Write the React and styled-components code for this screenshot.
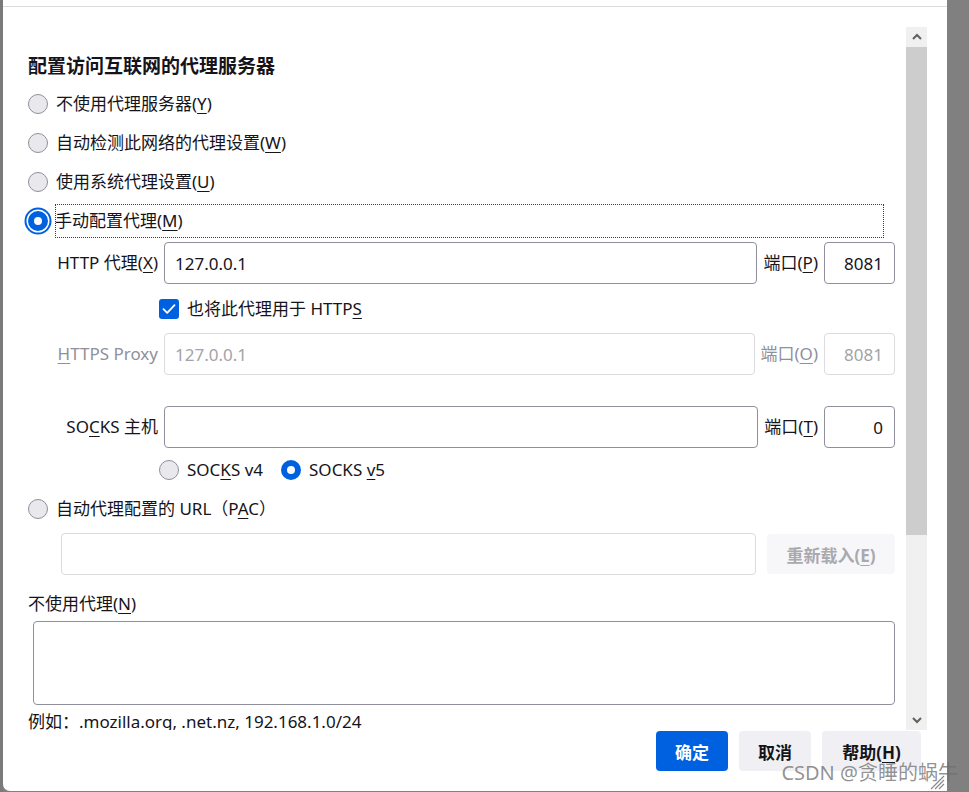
import React from 'react';
import styled, { createGlobalStyle } from 'styled-components';

const Global = createGlobalStyle`
  html, body { margin: 0; padding: 0; }
  body {
    width: 969px; height: 792px; overflow: hidden; background: #808080;
    font-family: "Noto Sans", "Noto Sans CJK SC", sans-serif; color: #15141a;
  }
  u { text-decoration-thickness: 1px; text-underline-offset: 3px; }
`;

const Screen = styled.div`
  display: flex; width: 969px; height: 792px; position: relative; overflow: hidden;
`;
const BackStrip = styled.div`
  width: 3px; flex: none; background: #7a7a7a;
`;
const Shade = styled.div`
  flex: 1; background: #808080;
`;
const Dialog = styled.div`
  position: relative; flex: none; width: 944px; height: 791px; background: #fff;
  display: flex; flex-direction: column; border-bottom-left-radius: 7px;
`;
const TopEdge = styled.div`
  flex: none; height: 6px; border-bottom: 1px solid #dcdcdc;
`;
const Body = styled.div`
  flex: none; display: flex; margin-top: 20px; height: 703px; padding-right: 20px;
`;
const Content = styled.div`
  flex: 1; overflow: hidden; padding: 27px 11px 0 25px; display: flex; flex-direction: column;
`;
const Title = styled.h1`
  margin: 0; font-size: 19px; font-weight: 700; line-height: 24px;
`;
const RadioRow = styled.div`
  display: flex; align-items: center; gap: 8px; height: 39px; flex: none;
  margin-top: ${p => p.$mt || 0}px;
`;
const RadioCircle = styled.span`
  flex: none; box-sizing: border-box; width: 20px; height: 20px; border-radius: 50%;
  border: ${p => (p.$checked ? '6px solid #0061e0' : '1px solid #8f8f9d')};
  background: ${p => (p.$checked ? '#fbfbfe' : '#e9e9ed')};
  box-shadow: ${p => (p.$focus ? '0 0 0 1.5px #fff, 0 0 0 3.5px #0061e0' : 'none')};
`;
const Label = styled.span`
  font-size: 17px; line-height: 24px; white-space: nowrap;
  color: ${p => (p.$disabled ? '#8f8f9d' : '#15141a')};
`;
const FocusLabel = styled.span`
  flex: 1; display: flex; align-items: center; height: 34px; box-sizing: border-box;
  margin-left: -1px; margin-right: 11px; outline: 1px dotted #3a3a3a; outline-offset: -1px;
  font-size: 17px; line-height: 24px; white-space: nowrap;
`;
const ProxyRow = styled.div`
  display: flex; align-items: center; gap: 6px; height: 42px; flex: none;
  padding-left: 28px; margin-top: ${p => p.$mt || 0}px;
`;
const FieldLabel = styled.span`
  flex: none; width: 102px; text-align: right; font-size: 17px; line-height: 24px; white-space: nowrap;
  color: ${p => (p.$disabled ? '#8f8f9d' : '#15141a')};
`;
const TextBox = styled.input`
  flex: 1; min-width: 0; height: 42px; box-sizing: border-box; margin: 0;
  border: 1px solid ${p => (p.disabled ? '#dcdce0' : '#8f8f9d')}; border-radius: 4px;
  padding: 0 10px; background: #fff; font: inherit; font-size: 17px;
  color: ${p => (p.disabled ? '#a3a3a8' : '#15141a')}; outline: none;
`;
const PortBox = styled(TextBox)`
  flex: none; width: 71px; text-align: right; padding: 0 11px 0 6px;
`;
const CheckRow = styled.div`
  display: flex; align-items: center; gap: 8px; height: 38px; flex: none;
  padding-left: 131px; margin-top: 6px;
`;
const CheckBox = styled.span`
  flex: none; width: 20px; height: 20px; border-radius: 3px; background: #0061e0;
  display: flex; align-items: center; justify-content: center;
`;
const SocksRow = styled.div`
  display: flex; align-items: center; gap: 18px; height: 36px; flex: none;
  padding-left: 131px; margin-top: 4px;
`;
const Option = styled.span`
  display: flex; align-items: center; gap: 8px;
`;
const PacRow = styled.div`
  display: flex; align-items: center; gap: 11px; height: 42px; flex: none;
  padding-left: 33px; margin-top: 5px;
`;
const ReloadButton = styled.button`
  flex: none; width: 128px; height: 40px; border: none; border-radius: 4px;
  background: #f7f7f9; color: #a9a9ae; font: inherit; font-size: 17px; font-weight: 700;
`;
const SectionLabel = styled.div`
  font-size: 17px; line-height: 24px; margin-top: ${p => p.$mt || 0}px; flex: none;
`;
const Area = styled.div`
  flex: none; height: 84px; margin: 5px 0 0 5px; box-sizing: border-box;
  border: 1px solid #8f8f9d; border-radius: 4px;
`;
const Hint = styled.div`
  flex: none; margin-top: 5px; font-size: 17px; line-height: 24px; white-space: nowrap;
`;
const ScrollBar = styled.div`
  flex: none; width: 21px; display: flex; flex-direction: column; background: #f0f0f0;
`;
const ScrollBtn = styled.div`
  flex: none; height: 20px; display: flex; align-items: center; justify-content: center;
  background: #f0f0f0;
`;
const Thumb = styled.div`
  flex: none; height: 488px; background: #cdcdcd;
`;
const Track = styled.div`
  flex: 1;
`;
const Footer = styled.div`
  flex: 1; display: flex; justify-content: flex-end; align-items: flex-start; gap: 11px;
  padding: 1px 26px 0 0;
`;
const Button = styled.button`
  flex: none; height: 40px; width: ${p => p.$w}px; border: none; border-radius: 4px;
  background: ${p => (p.$primary ? '#0061e0' : '#f0f0f4')};
  color: ${p => (p.$primary ? '#fff' : '#15141a')};
  font: inherit; font-size: 17px; font-weight: 700; padding: 0;
`;
const Grip = styled.svg`
  position: absolute; right: 2px; bottom: 1px;
`;
const Watermark = styled.div`
  position: absolute; right: 11px; top: 760px; font-size: 20px; line-height: 26px;
  color: rgba(110, 110, 110, 0.75); white-space: nowrap; pointer-events: none;
`;

const Radio = ({ checked, focus, children, mt }) => (
  <RadioRow $mt={mt}>
    <RadioCircle $checked={checked} $focus={focus} />
    {focus ? <FocusLabel>{children}</FocusLabel> : <Label>{children}</Label>}
  </RadioRow>
);

export default function App() {
  return (
    <>
      <Global />
      <Screen>
        <BackStrip />
        <Dialog>
          <TopEdge />
          <Body>
            <Content>
              <Title>配置访问互联网的代理服务器</Title>
              <Radio mt={6}>不使用代理服务器(<u>Y</u>)</Radio>
              <Radio>自动检测此网络的代理设置(<u>W</u>)</Radio>
              <Radio>使用系统代理设置(<u>U</u>)</Radio>
              <Radio checked focus>手动配置代理(<u>M</u>)</Radio>

              <ProxyRow $mt={2}>
                <FieldLabel>HTTP 代理(<u>X</u>)</FieldLabel>
                <TextBox defaultValue="127.0.0.1" readOnly />
                <Label>端口(<u>P</u>)</Label>
                <PortBox defaultValue="8081" readOnly />
              </ProxyRow>
              <CheckRow>
                <CheckBox>
                  <svg width="16" height="16" viewBox="0 0 16 16">
                    <path d="M2.5 8.2 L6.2 11.8 L13.5 4.2" fill="none" stroke="#fff" strokeWidth="1.8" strokeLinecap="round" strokeLinejoin="round" />
                  </svg>
                </CheckBox>
                <Label>也将此代理用于 HTTP<u>S</u></Label>
              </CheckRow>
              <ProxyRow $mt={5}>
                <FieldLabel $disabled><u>H</u>TTPS Proxy</FieldLabel>
                <TextBox defaultValue="127.0.0.1" disabled />
                <Label $disabled>端口(<u>O</u>)</Label>
                <PortBox defaultValue="8081" disabled />
              </ProxyRow>
              <ProxyRow $mt={31}>
                <FieldLabel>SO<u>C</u>KS 主机</FieldLabel>
                <TextBox defaultValue="" readOnly />
                <Label>端口(<u>T</u>)</Label>
                <PortBox defaultValue="0" readOnly />
              </ProxyRow>
              <SocksRow>
                <Option>
                  <RadioCircle />
                  <Label>SOC<u>K</u>S v4</Label>
                </Option>
                <Option>
                  <RadioCircle $checked />
                  <Label>SOCKS <u>v</u>5</Label>
                </Option>
              </SocksRow>
              <Radio mt={1}>自动代理配置的 URL（P<u>A</u>C）</Radio>
              <PacRow>
                <TextBox defaultValue="" disabled />
                <ReloadButton>重新载入(<u>E</u>)</ReloadButton>
              </PacRow>
              <SectionLabel $mt={17}>不使用代理(<u>N</u>)</SectionLabel>
              <Area />
              <Hint>例如：.mozilla.org, .net.nz, 192.168.1.0/24</Hint>
            </Content>
            <ScrollBar>
              <ScrollBtn>
                <svg width="10" height="8" viewBox="0 0 10 8">
                  <path d="M1 6 L5 2 L9 6" fill="none" stroke="#606060" strokeWidth="2" />
                </svg>
              </ScrollBtn>
              <Thumb />
              <Track />
              <ScrollBtn>
                <svg width="10" height="8" viewBox="0 0 10 8">
                  <path d="M1 2 L5 6 L9 2" fill="none" stroke="#606060" strokeWidth="2" />
                </svg>
              </ScrollBtn>
            </ScrollBar>
          </Body>
          <Footer>
            <Button $primary $w={72}>确定</Button>
            <Button $w={72}>取消</Button>
            <Button $w={99}>帮助(<u>H</u>)</Button>
          </Footer>
          <Grip width="18" height="18" viewBox="0 0 18 18">
            <path d="M17 4 L4 17 M17 8 L8 17 M17 12 L12 17" stroke="#8a8a8a" strokeWidth="1.2" />
          </Grip>
        </Dialog>
        <Shade />
        <Watermark>CSDN @贪睡的蜗牛</Watermark>
      </Screen>
    </>
  );
}
